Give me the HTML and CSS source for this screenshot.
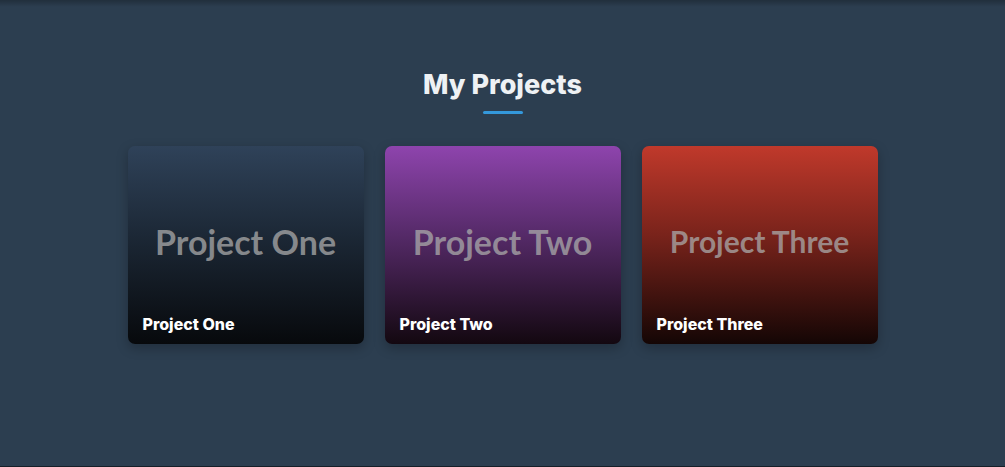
FILE: index.html
```html
<!DOCTYPE html>
<html lang="en">
<head>
<meta charset="utf-8">
<title>My Projects</title>
<link rel="stylesheet" href="styles.css">
</head>
<body>
<section class="projects">
  <h2 class="title">My Projects</h2>
  <div class="underline"></div>
  <div class="grid">
    <div class="card card-one">
      <div class="placeholder">Project One</div>
      <div class="caption">Project One</div>
    </div>
    <div class="card card-two">
      <div class="placeholder">Project Two</div>
      <div class="caption">Project Two</div>
    </div>
    <div class="card card-three">
      <div class="placeholder placeholder-long">Project Three</div>
      <div class="caption">Project Three</div>
    </div>
  </div>
</section>
</body>
</html>
```
FILE: styles.css
```css
html, body {
  margin: 0;
  padding: 0;
}
body {
  width: 1005px;
  height: 467px;
  overflow: hidden;
  background:
    linear-gradient(to bottom, rgba(0,0,0,0.25), rgba(0,0,0,0) 7px),
    linear-gradient(to top, #161f28 1px, rgba(0,0,0,0) 1px),
    #2c3e50;
  font-family: Inter, "Open Sans", sans-serif;
}
.projects {
  display: flex;
  flex-direction: column;
  align-items: center;
  padding-top: 68px;
}
.title {
  margin: 0;
  font-size: 27px;
  line-height: 34px;
  font-weight: 800;
  color: #eef1f4;
  letter-spacing: 0;
}
.underline {
  width: 40px;
  height: 3px;
  border-radius: 2px;
  background: #3498db;
  margin-top: 9px;
}
.grid {
  display: grid;
  grid-template-columns: repeat(3, 236px);
  gap: 21px;
  margin-top: 32px;
}
.card {
  height: 198px;
  border-radius: 7px;
  overflow: hidden;
  display: flex;
  flex-direction: column;
  box-shadow: 0 4px 12px rgba(0,0,0,0.25);
}
.card-one {
  background: linear-gradient(to bottom, #2f4259 0%, #1c2836 45%, #07090c 100%);
}
.card-two {
  background: linear-gradient(to bottom, #8e44ad 0%, #552a68 45%, #130810 100%);
}
.card-three {
  background: linear-gradient(to bottom, #c0392b 0%, #79231b 45%, #140605 100%);
}
.placeholder {
  flex: 1;
  display: flex;
  align-items: center;
  justify-content: center;
  padding-top: 24px;
  font-family: Lato, "Open Sans", sans-serif;
  font-size: 34px;
  font-weight: 700;
  color: rgba(170,170,170,0.75);
}
.placeholder-long {
  font-size: 30px;
}
.caption {
  padding: 0 15px 8px;
  font-size: 16px;
  line-height: 24px;
  font-weight: 800;
  color: #ffffff;
}
```
